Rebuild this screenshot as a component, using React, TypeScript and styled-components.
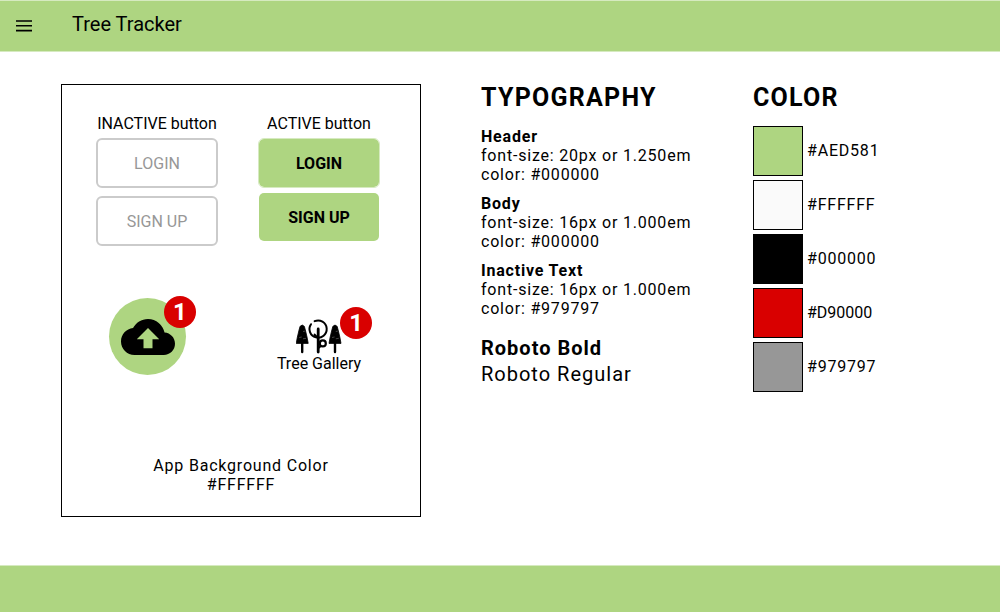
import React from "react";
import styled, { createGlobalStyle, css } from "styled-components";

const green = "#aed581";
const red = "#d90000";
const grey = "#979797";
const tracking = "0.05em";

const GlobalStyle = createGlobalStyle`
  *, *::before, *::after { box-sizing: border-box; }
  body {
    margin: 0;
    background: #fff;
    color: #000;
    font-family: Roboto, "Liberation Sans", sans-serif;
    font-size: 16px;
    line-height: 19px;
  }
  h1, h2, h3, p, ul { margin: 0; padding: 0; }
`;

const Page = styled.div`
  min-height: 100vh;
  display: flex;
  flex-direction: column;
`;

const TopBar = styled.header`
  display: flex;
  align-items: center;
  gap: 36px;
  height: 52px;
  padding: 0 12px;
  background: ${green};
  border-top: 1px solid #d6eac0;
  border-bottom: 1px solid #d6eac0;
`;

const MenuButton = styled.button`
  display: flex;
  padding: 2px;
  border: 0;
  background: none;
  cursor: pointer;
`;

const AppTitle = styled.h1`
  padding-bottom: 4px;
  font-size: 20px;
  line-height: 24px;
  font-weight: 400;
`;

const Main = styled.main`
  flex: 1;
  display: flex;
  flex-wrap: wrap;
  align-items: flex-start;
  gap: 32px 60px;
  padding: 32px 60px 48px 61px;
`;

const Card = styled.section`
  flex: 0 1 360px;
  display: flex;
  flex-direction: column;
  padding: 29px 34px 22px;
  border: 1px solid #000;
`;

const Columns = styled.div`
  display: grid;
  grid-template-columns: 122px 122px;
  column-gap: 40px;
`;

const ButtonGroup = styled.div<{ $gap: number }>`
  display: flex;
  flex-direction: column;
  gap: ${(p) => p.$gap}px;
`;

const GroupLabel = styled.h3`
  margin-bottom: 5px;
  font-size: 16px;
  line-height: 19px;
  font-weight: 400;
  text-align: center;
  white-space: nowrap;
`;

const ActionButton = styled.button<{ $active?: boolean; $outlined?: boolean }>`
  height: 50px;
  padding: 0;
  border-radius: 6px;
  font: inherit;
  ${(p) =>
    p.$active
      ? css`
          border: 1px solid ${p.$outlined ? "#d6eac0" : "transparent"};
          background: ${green};
          background-clip: padding-box;
          color: #000;
          font-weight: 700;
          cursor: pointer;
        `
      : css`
          border: 2px solid #cbcbcb;
          background: #fff;
          color: ${grey};
        `}
`;

const IconRow = styled(Columns)`
  margin-top: 50px;
`;

const UploadButton = styled.button`
  position: relative;
  display: flex;
  align-items: center;
  justify-content: center;
  width: 77px;
  height: 77px;
  margin: 2px 0 0 13px;
  padding: 0;
  border: 0;
  border-radius: 50%;
  background: ${green};
  font: inherit;
  cursor: pointer;
`;

const GalleryLink = styled.a`
  position: relative;
  display: flex;
  flex-direction: column;
  align-items: center;
  justify-self: center;
  margin-top: 22px;
  color: #000;
  text-decoration: none;
`;

const Badge = styled.span<{ $right: number; $top: number }>`
  position: absolute;
  top: ${(p) => p.$top}px;
  right: ${(p) => p.$right}px;
  width: 32px;
  height: 32px;
  border-radius: 50%;
  background: ${red};
  color: #fff;
  font-size: 24px;
  line-height: 32px;
  font-weight: 700;
  text-align: center;
`;

const CardNote = styled.p`
  margin-top: 81px;
  letter-spacing: ${tracking};
  text-align: center;
`;

const TypographySection = styled.section`
  flex: 0 0 212px;
`;

const Heading = styled.h2`
  font-size: 25px;
  line-height: 28px;
  font-weight: 700;
  letter-spacing: ${tracking};
`;

const TypeSpec = styled.div`
  margin-top: 10px;
  letter-spacing: ${tracking};
  white-space: nowrap;
`;

const SpecList = styled.div`
  margin-top: 15px;

  ${TypeSpec}:first-child { margin-top: 0; }
`;

const SpecName = styled.h3`
  font-size: 16px;
  line-height: 19px;
  font-weight: 700;
`;

const FontSamples = styled.div`
  margin-top: 17px;
`;

const FontSample = styled.p<{ $bold?: boolean }>`
  font-size: 20px;
  line-height: 26px;
  font-weight: ${(p) => (p.$bold ? 700 : 400)};
  letter-spacing: ${tracking};
`;

const SwatchList = styled.ul`
  display: flex;
  flex-direction: column;
  gap: 4px;
  margin-top: 14px;
  list-style: none;
`;

const SwatchRow = styled.li`
  display: flex;
  align-items: center;
  gap: 4px;
`;

const Swatch = styled.span<{ $color: string }>`
  width: 50px;
  height: 50px;
  border: 1px solid #000;
  background: ${(p) => p.$color};
`;

const SwatchName = styled.span<{ $tracked: boolean }>`
  padding-bottom: 2px;
  letter-spacing: ${(p) => (p.$tracked ? tracking : "normal")};
`;

const BottomBar = styled.footer`
  height: 47px;
  background: ${green};
  border-top: 1px solid #d6eac0;
`;

const MenuIcon = () => (
  <svg width="20" height="20" viewBox="0 0 20 20" aria-hidden="true">
    <path d="M2 5h16M2 9.8h16M2 14.6h16" stroke="#000" strokeWidth="1.6" />
  </svg>
);

const CloudUploadIcon = () => (
  <svg width="54" height="54" viewBox="0 0 24 24" aria-hidden="true">
    <path d="M19.35 10.04C18.67 6.59 15.64 4 12 4 9.11 4 6.6 5.64 5.35 8.04 2.34 8.36 0 10.91 0 14c0 3.31 2.69 6 6 6h13c2.76 0 5-2.24 5-5 0-2.64-2.05-4.78-4.65-4.96zM14 13v4h-4v-4H7l5-5 5 5h-3z" />
  </svg>
);

const Conifer = ({ x }: { x: number }) => (
  <g transform={`translate(${x} 0)`}>
    <path d="M4 8.500Q6.200 5.500 8.400 8.500L9.600 13 11 19 12.200 25.400H.2L1.400 19 2.800 13Z" stroke="#000" strokeWidth=".8" strokeLinejoin="round" />
    <path d="M6.200 25v9" stroke="#000" strokeWidth="2.400" strokeLinecap="round" />
    <path d="M7 13.500l2-.4M3.200 19.500l2.500-.5M7 20.800l3-.5" stroke="#888" strokeWidth=".5" />
  </g>
);

const TreesIcon = () => (
  <svg width="46" height="36" viewBox="0 0 46 36" aria-hidden="true">
    <Conifer x={0} />
    <Conifer x={32.8} />
    <path d="M18.600 3.200A8.600 8.600 0 1 1 15 6.200" fill="none" stroke="#000" strokeWidth="2" strokeLinecap="round" />
    <path d="M22.200 11v23" fill="none" stroke="#000" strokeWidth="2.800" strokeLinecap="round" />
    <path d="M22 20l-3.500-3.500" stroke="#000" strokeWidth="1.800" strokeLinecap="round" />
    <path d="M22.500 30l3-2.500" stroke="#000" strokeWidth="1.800" />
    <circle cx="26.800" cy="25.400" r="3" fill="#fff" stroke="#000" strokeWidth="2.200" />
  </svg>
);

const specs = [
  { name: "Header", size: "20px or 1.250em", color: "#000000" },
  { name: "Body", size: "16px or 1.000em", color: "#000000" },
  { name: "Inactive Text", size: "16px or 1.000em", color: "#979797" },
];

const swatches = [
  { name: "#AED581", fill: green, tracked: true },
  { name: "#FFFFFF", fill: "#fafafa", tracked: true },
  { name: "#000000", fill: "#000", tracked: true },
  { name: "#D90000", fill: red, tracked: false },
  { name: "#979797", fill: grey, tracked: true },
];

export default function App() {
  return (
    <Page>
      <GlobalStyle />
      <TopBar>
        <MenuButton type="button" aria-label="Menu">
          <MenuIcon />
        </MenuButton>
        <AppTitle>Tree Tracker</AppTitle>
      </TopBar>
      <Main>
        <Card>
          <Columns>
            <div>
              <GroupLabel>INACTIVE button</GroupLabel>
              <ButtonGroup $gap={8}>
                <ActionButton type="button" disabled>LOGIN</ActionButton>
                <ActionButton type="button" disabled>SIGN UP</ActionButton>
              </ButtonGroup>
            </div>
            <div>
              <GroupLabel>ACTIVE button</GroupLabel>
              <ButtonGroup $gap={4}>
                <ActionButton type="button" $active $outlined>LOGIN</ActionButton>
                <ActionButton type="button" $active>SIGN UP</ActionButton>
              </ButtonGroup>
            </div>
          </Columns>
          <IconRow>
            <UploadButton type="button" aria-label="Upload">
              <CloudUploadIcon />
              <Badge $top={-2} $right={-10}>1</Badge>
            </UploadButton>
            <GalleryLink href="#gallery">
              <TreesIcon />
              Tree Gallery
              <Badge $top={-11} $right={-11}>1</Badge>
            </GalleryLink>
          </IconRow>
          <CardNote>
            App Background Color
            <br />
            #FFFFFF
          </CardNote>
        </Card>
        <TypographySection>
          <Heading>TYPOGRAPHY</Heading>
          <SpecList>
            {specs.map((s) => (
              <TypeSpec key={s.name}>
                <SpecName>{s.name}</SpecName>
                <p>font-size: {s.size}</p>
                <p>color: {s.color}</p>
              </TypeSpec>
            ))}
          </SpecList>
          <FontSamples>
            <FontSample $bold>Roboto Bold</FontSample>
            <FontSample>Roboto Regular</FontSample>
          </FontSamples>
        </TypographySection>
        <section>
          <Heading>COLOR</Heading>
          <SwatchList>
            {swatches.map((s) => (
              <SwatchRow key={s.name}>
                <Swatch $color={s.fill} />
                <SwatchName $tracked={s.tracked}>{s.name}</SwatchName>
              </SwatchRow>
            ))}
          </SwatchList>
        </section>
      </Main>
      <BottomBar />
    </Page>
  );
}
